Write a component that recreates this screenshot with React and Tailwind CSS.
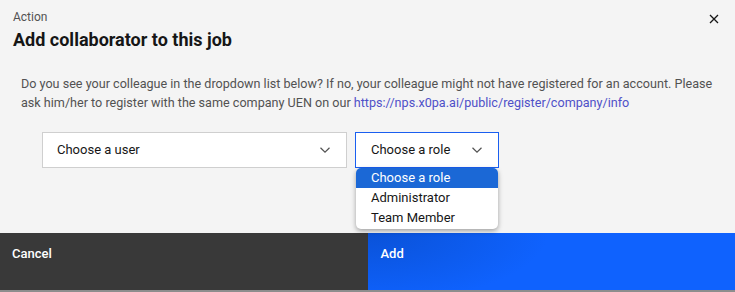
import React from "react";

function Chevron({ className = "" }) {
  return (
    <svg width="12" height="8" viewBox="0 0 12 8" className={className} fill="none">
      <path d="M1.5 1.8 L6 6.2 L10.5 1.8" stroke="#525252" strokeWidth="1.2" />
    </svg>
  );
}

export default function App() {
  return (
    <div className="relative w-[735px] h-[292px] bg-[#f4f4f4] flex flex-col font-['Roboto',sans-serif] overflow-hidden">
      <div className="pl-[13px] pt-[9px]">
        <div className="text-[12px] leading-[16px] text-[#525252]">Action</div>
        <div className="mt-[1px] text-[18px] leading-[28px] font-bold text-[#161616]">
          Add collaborator to this job
        </div>
      </div>
      <button className="absolute top-[10px] right-[12px] w-[18px] h-[18px] flex items-center justify-center">
        <svg width="10" height="10" viewBox="0 0 10 10">
          <path d="M1 1 L9 9 M9 1 L1 9" stroke="#161616" strokeWidth="1.3" />
        </svg>
      </button>

      <p className="mt-[20px] pl-[21px] pr-[10px] text-[12.6px] leading-[19px] text-[#525252]">
        Do you see your colleague in the dropdown list below? If no, your colleague might not have registered for an account. Please ask him/her to register with the same company UEN on our{" "}
        <a className="text-[#4f50c8]">https://nps.x0pa.ai/public/register/company/info</a>
      </p>

      <div className="mt-[20px] pl-[42px] flex gap-[8px]">
        <div className="w-[305px] h-[36px] bg-white border border-[#cfcfcf] flex items-center justify-between pl-[14px] pr-[15px] text-[13px] text-[#161616]">
          <span>Choose a user</span>
          <Chevron />
        </div>
        <div className="w-[144px] h-[36px] bg-white border border-[#1a5ff0] flex items-center justify-between pl-[15px] pr-[15px] text-[13px] text-[#161616]">
          <span>Choose a role</span>
          <Chevron />
        </div>
      </div>

      <div className="absolute left-[356px] top-[168px] w-[142px] h-[61px] bg-white rounded-[5px] shadow-[0_2px_5px_rgba(0,0,0,0.35)] overflow-hidden text-[13px] text-[#161616]">
        <div className="h-[20px] leading-[20px] pl-[15px] bg-[#1b68d6] text-white">Choose a role</div>
        <div className="h-[20px] leading-[20px] pl-[15px]">Administrator</div>
        <div className="h-[20px] leading-[20px] pl-[15px]">Team Member</div>
      </div>

      <div className="flex-1" />

      <div className="grid grid-cols-2 h-[59px] border-b-2 border-[#8d8d8d] text-[13px] font-medium text-white">
        <div className="bg-[#393939] pl-[12px] pt-[12px] leading-[18px]">Cancel</div>
        <div className="bg-[#0f62fe] bg-[radial-gradient(ellipse_180px_70px_at_0%_0%,#0a52d8_0%,#0f62fe_100%)] pl-[13px] pt-[12px] leading-[18px]">Add</div>
      </div>
    </div>
  );
}
